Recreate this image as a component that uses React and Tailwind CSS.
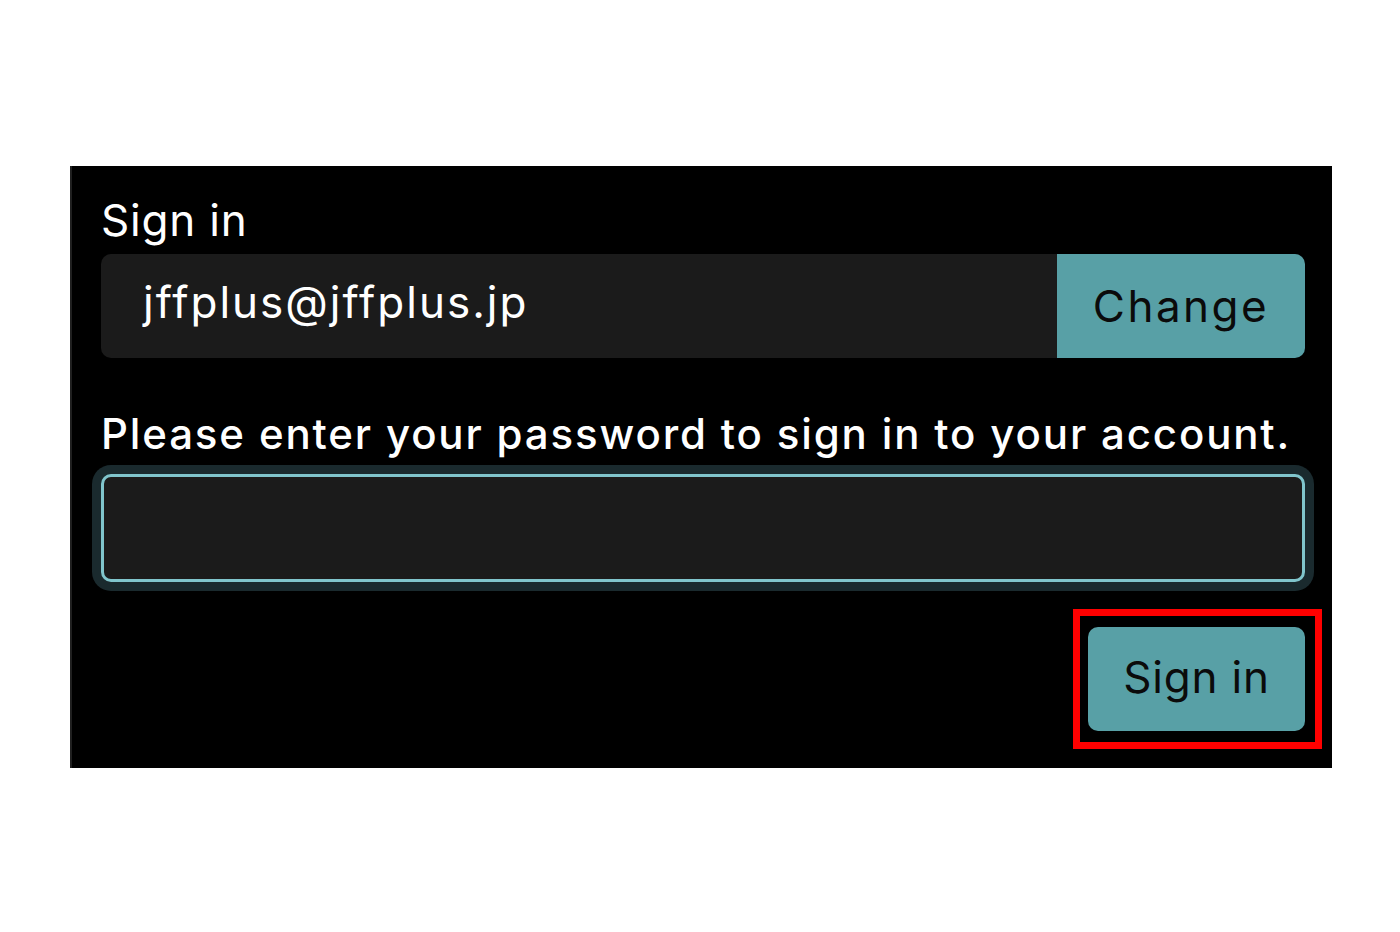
const SignInPanel = () => {
    return (
        <div className="w-[1262px] h-[602px] bg-black border-l-2 border-[#202020] pl-[29px] pr-[27px] pt-[26px]">
            <h1 className="text-[44px] leading-[56px] text-white font-normal tracking-[0.8px]">Sign in</h1>
            <div className="flex h-[104px] mt-[6px]">
                <div className="flex-1 flex items-center bg-[#1b1b1b] rounded-l-[10px] pl-[42px] pb-[8px] text-white text-[44px] tracking-[2px]">
                    jffplus@jffplus.jp
                </div>
                <button className="w-[248px] bg-[#58a0a6] rounded-r-[10px] text-[#0b0b0b] text-[44px] tracking-[2.5px]">Change</button>
            </div>
            <p className="mt-[48px] text-[42px] leading-[56px] text-white font-medium tracking-[1.85px] whitespace-nowrap">Please enter your password to sign in to your account.</p>
            <div className="mt-[12px]">
                <input type="password" className="block w-full h-[108px] bg-[#1b1b1b] border-[3px] border-[#80c5cc] rounded-[10px] shadow-[0_0_0_9px_#1a2a2e] outline-none" />
            </div>
            <div className="flex justify-end mt-[27px] -mr-[17px]">
                <div className="border-[7px] border-[#ff0000] pl-[8px] pr-[10px] pt-[11px] pb-[11px]">
                    <button className="w-[217px] h-[104px] bg-[#58a0a6] rounded-[10px] text-[#0b0b0b] text-[44px] tracking-[0.8px] pb-[4px]">Sign in</button>
                </div>
            </div>
        </div>
    );
};

export default function App() {
    return (
        <div className="min-h-screen bg-white pt-[166px] pl-[70px] font-['Inter','Noto_Sans',sans-serif]">
            <SignInPanel />
        </div>
    );
}
